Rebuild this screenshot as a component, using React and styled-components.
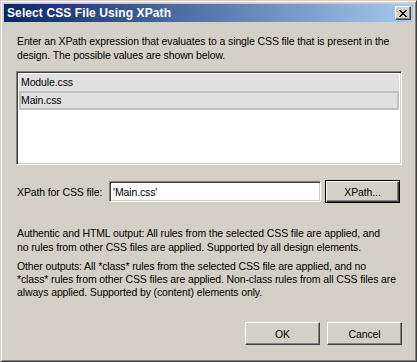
import React from "react";
import styled, { createGlobalStyle } from "styled-components";

const Global = createGlobalStyle`
  html, body { margin: 0; padding: 0; background: #d4d0c8; }
  * { box-sizing: border-box; }
`;

const face = "#d4d0c8";
const font = `"Liberation Sans", Arial, sans-serif`;

const Window = styled.div`
  width: 417px;
  height: 362px;
  background: ${face};
  border-style: solid;
  border-width: 1px;
  border-color: ${face} #404040 #404040 ${face};
  box-shadow: inset 1px 1px #fff, inset -1px -1px #808080;
  padding: 3px;
  display: flex;
  flex-direction: column;
  font-family: ${font};
  font-size: 10.5px;
  letter-spacing: -0.12px;
  color: #000;
`;

const TitleBar = styled.div`
  height: 18px;
  flex: none;
  display: flex;
  align-items: center;
  justify-content: space-between;
  padding: 0 2px 0 3px;
  background: linear-gradient(to right, #0a246a, #a6caf0);
`;

const Title = styled.span`
  color: #fff;
  font-weight: bold;
  font-size: 12px;
  letter-spacing: 0.1px;
`;

const CloseButton = styled.div`
  width: 16px;
  height: 14px;
  background: ${face};
  border-style: solid;
  border-width: 1px;
  border-color: #fff #404040 #404040 #fff;
  box-shadow: inset -1px -1px #808080;
  display: flex;
  align-items: center;
  justify-content: center;
`;

const Client = styled.div`
  flex: 1;
  display: flex;
  flex-direction: column;
  padding: 12px 11px 0 12px;
`;

const Para = styled.p`
  margin: ${(p) => p.$mt || 0}px 0 0 1px;
  line-height: ${(p) => p.$lh || 14}px;
  white-space: nowrap;
`;

const ListBox = styled.div`
  margin-top: 9px;
  height: 94px;
  background: #fff;
  border-style: solid;
  border-width: 1px;
  border-color: #808080 #fff #fff #808080;
  box-shadow: inset 1px 1px #404040, inset -1px -1px ${face};
  padding: 2px 2px;
  display: flex;
  flex-direction: column;
`;

const Item = styled.div`
  height: ${(p) => (p.$focus ? 19 : 17)}px;
  background: #e0e0e0;
  line-height: ${(p) => (p.$focus ? 15 : 17)}px;
  padding-left: ${(p) => (p.$focus ? 0 : 2)}px;
  border: ${(p) => (p.$focus ? "2px solid #c0c0c0" : "none")};
  white-space: nowrap;
`;

const Row = styled.div`
  margin-top: 15px;
  display: flex;
  align-items: center;
  height: 23px;
`;

const Label = styled.span`
  width: 93px;
  padding-left: 1px;
  flex: none;
`;

const TextInput = styled.div`
  width: 212px;
  height: 21px;
  flex: none;
  background: #fff;
  border-style: solid;
  border-width: 1px;
  border-color: #808080 #fff #fff #808080;
  box-shadow: inset 1px 1px #404040, inset -1px -1px ${face};
  padding-left: 3px;
  display: flex;
  align-items: center;
`;

const Button = styled.div`
  width: 75px;
  height: 23px;
  flex: none;
  display: flex;
  align-items: center;
  justify-content: center;
  background: ${face};
  border-style: solid;
  border-width: 1px;
  border-color: ${(p) => (p.$default ? "#000" : "#fff #404040 #404040 #fff")};
  box-shadow: ${(p) =>
    p.$default
      ? "inset 1px 1px #fff, inset -1px -1px #404040, inset -2px -2px #808080"
      : "inset -1px -1px #808080"};
  margin-left: ${(p) => p.$ml || 0}px;
`;

const Footer = styled.div`
  margin-top: auto;
  margin-bottom: 13px;
  display: flex;
  justify-content: flex-end;
  gap: 7px;
`;

const CloseIcon = () => (
  <svg width="8" height="7" viewBox="0 0 8 7" shapeRendering="crispEdges">
    <path
      fill="#000"
      d="M0 0h2v1h-2zM6 0h2v1h-2zM1 1h2v1h-2zM5 1h2v1h-2zM2 2h4v1h-4zM3 3h2v1h-2zM2 4h4v1h-4zM1 5h2v1h-2zM5 5h2v1h-2zM0 6h2v1h-2zM6 6h2v1h-2z"
    />
  </svg>
);

export default function App() {
  return (
    <>
      <Global />
      <Window>
        <TitleBar>
          <Title>Select CSS File Using XPath</Title>
          <CloseButton>
            <CloseIcon />
          </CloseButton>
        </TitleBar>
        <Client>
          <Para>
            Enter an XPath expression that evaluates to a single CSS file that is present in the
            <br />
            design. The possible values are shown below.
          </Para>
          <ListBox>
            <Item>Module.css</Item>
            <Item $focus>Main.css</Item>
          </ListBox>
          <Row>
            <Label>XPath for CSS file:</Label>
            <TextInput>'Main.css'</TextInput>
            <Button $default $ml={4}>XPath...</Button>
          </Row>
          <Para $mt={23}>
            Authentic and HTML output: All rules from the selected CSS file are applied, and
            <br />
            no rules from other CSS files are applied. Supported by all design elements.
          </Para>
          <Para $mt={6} $lh={13}>
            Other outputs: All *class* rules from the selected CSS file are applied, and no
            <br />
            *class* rules from other CSS files are applied. Non-class rules from all CSS files are
            <br />
            always applied. Supported by (content) elements only.
          </Para>
          <Footer>
            <Button>OK</Button>
            <Button>Cancel</Button>
          </Footer>
        </Client>
      </Window>
    </>
  );
}
